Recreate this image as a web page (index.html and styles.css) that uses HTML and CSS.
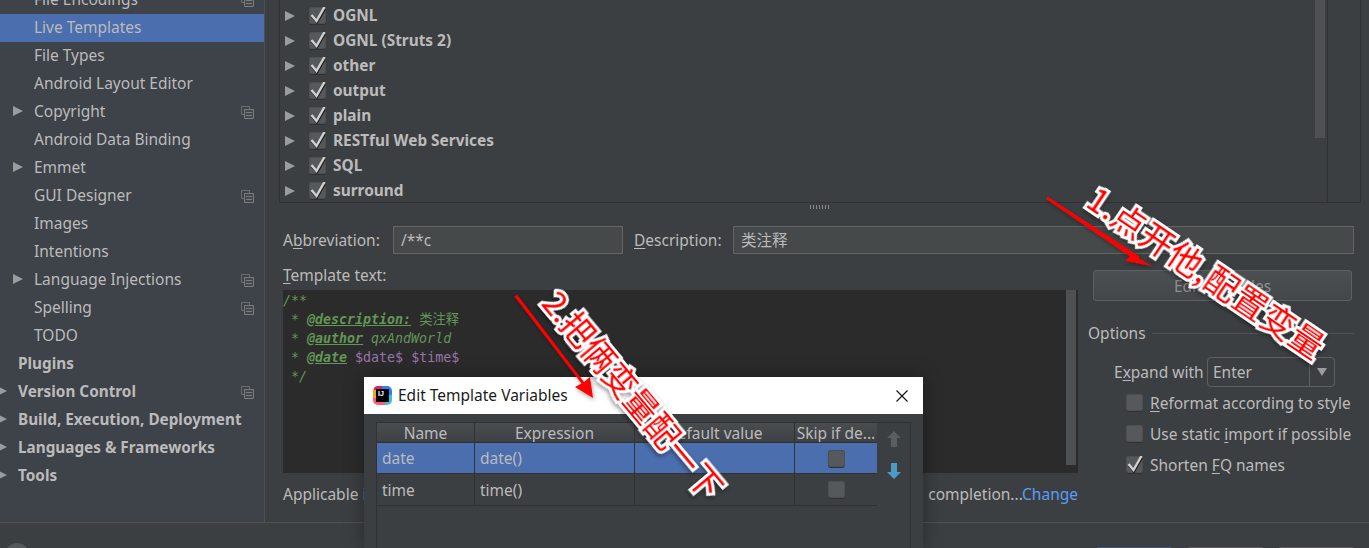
FILE: index.html
```html
<!DOCTYPE html>
<html lang="en">
<head>
<meta charset="utf-8">
<title>Live Templates</title>
<link rel="stylesheet" href="styles.css">
</head>
<body>
<svg class="defs" width="0" height="0" aria-hidden="true">
  <symbol id="copy" viewBox="0 0 13 13">
    <path d="M3.500 8.500H.5V.5h8v3" fill="none" stroke="#6b6e70"/>
    <path d="M3.500 3.500h9v9h-9zM5 6.500h6M5 9.500h6" fill="#45484a" stroke="#7b7e80"/>
  </symbol>
  <symbol id="check" viewBox="0 0 17 17">
    <path d="M3 9.500l5 6L16 2" fill="none" stroke="#1f2021" stroke-width="2.200"/>
    <path d="M2.500 8l5 6L15.500 0" fill="none" stroke="#d0d0d0" stroke-width="2.400"/>
  </symbol>
</svg>
<div class="app">
  <div class="main">
    <nav class="sidebar">
      <div class="item sub"><span class="label">File Encodings</span><svg class="copy"><use href="#copy"/></svg></div>
      <div class="item sub selected"><span class="label">Live Templates</span></div>
      <div class="item sub"><span class="label">File Types</span></div>
      <div class="item sub"><span class="label">Android Layout Editor</span></div>
      <div class="item sub"><i class="arrow nav-arrow"></i><span class="label">Copyright</span><svg class="copy"><use href="#copy"/></svg></div>
      <div class="item sub"><span class="label">Android Data Binding</span></div>
      <div class="item sub"><i class="arrow nav-arrow"></i><span class="label">Emmet</span></div>
      <div class="item sub"><span class="label">GUI Designer</span><svg class="copy"><use href="#copy"/></svg></div>
      <div class="item sub"><span class="label">Images</span></div>
      <div class="item sub"><span class="label">Intentions</span></div>
      <div class="item sub"><i class="arrow nav-arrow"></i><span class="label">Language Injections</span><svg class="copy"><use href="#copy"/></svg></div>
      <div class="item sub"><span class="label">Spelling</span><svg class="copy"><use href="#copy"/></svg></div>
      <div class="item sub"><span class="label">TODO</span></div>
      <div class="item top"><span class="label">Plugins</span></div>
      <div class="item top"><i class="arrow top-arrow"></i><span class="label">Version Control</span><svg class="copy"><use href="#copy"/></svg></div>
      <div class="item top"><i class="arrow top-arrow"></i><span class="label">Build, Execution, Deployment</span></div>
      <div class="item top"><i class="arrow top-arrow"></i><span class="label">Languages &amp; Frameworks</span></div>
      <div class="item top"><i class="arrow top-arrow"></i><span class="label">Tools</span></div>
    </nav>
    <section class="content">
      <div class="tree">
        <div class="tree-rows">
          <div class="row"><i class="arrow"></i><span class="box"><svg><use href="#check"/></svg></span><b>OGNL</b></div>
          <div class="row"><i class="arrow"></i><span class="box"><svg><use href="#check"/></svg></span><b>OGNL (Struts 2)</b></div>
          <div class="row"><i class="arrow"></i><span class="box"><svg><use href="#check"/></svg></span><b>other</b></div>
          <div class="row"><i class="arrow"></i><span class="box"><svg><use href="#check"/></svg></span><b>output</b></div>
          <div class="row"><i class="arrow"></i><span class="box"><svg><use href="#check"/></svg></span><b>plain</b></div>
          <div class="row"><i class="arrow"></i><span class="box"><svg><use href="#check"/></svg></span><b>RESTful Web Services</b></div>
          <div class="row"><i class="arrow"></i><span class="box"><svg><use href="#check"/></svg></span><b>SQL</b></div>
          <div class="row"><i class="arrow"></i><span class="box"><svg><use href="#check"/></svg></span><b>surround</b></div>
        </div>
        <div class="tree-scroll"><span class="thumb"></span></div>
        <div class="tree-side"></div>
      </div>
      <div class="splitter"><span class="dots"></span></div>
      <div class="form">
        <div class="fields">
          <span class="field-label abbr">A<u>b</u>breviation:</span>
          <span class="input abbr-input">/**c</span>
          <span class="field-label desc"><u>D</u>escription:</span>
          <span class="input desc-input">类注释</span>
        </div>
        <div class="columns">
          <div class="left">
            <div class="tt-label"><u>T</u>emplate text:</div>
            <div class="editor">
              <pre class="code"><span class="cm">/**
 * <span class="tag">@description:</span> <span class="cjk">类注释</span>
 * <span class="tag">@author</span> qxAndWorld
 * <span class="tag">@date</span> <span class="var">$date$</span> <span class="var">$time$</span>
 */</span></pre>
              <div class="ed-scroll"></div>
            </div>
            <div class="applicable"><span>Applicable in Java: statement, expression, declaration, comment, string, smart type</span><span class="app-end"><span>completion...</span><a class="link">Change</a></span></div>
          </div>
          <div class="right">
            <button class="edit-btn">Edit variables</button>
            <div class="options-head"><span>Options</span><i></i></div>
            <div class="expand"><span>E<u>x</u>pand with</span><div class="combo"><span class="combo-val">Enter</span><span class="combo-btn"><i></i></span></div></div>
            <div class="opt"><span class="box"></span><span><u>R</u>eformat according to style</span></div>
            <div class="opt"><span class="box"></span><span>Use static <u>i</u>mport if possible</span></div>
            <div class="opt"><span class="box"><svg><use href="#check"/></svg></span><span>Shorten <u>F</u>Q names</span></div>
          </div>
        </div>
      </div>
    </section>
  </div>
  <footer class="footer">
    <span class="help"></span>
    <div class="btns"><span class="btn primary"></span><span class="btn"></span><span class="btn"></span></div>
  </footer>
</div>

<div class="dialog">
  <div class="titlebar">
    <span class="logo"><span class="logo-square">IJ</span></span>
    <span class="title">Edit Template Variables</span>
    <svg class="close" width="12" height="12" viewBox="0 0 12 12"><path d="M.5.5l11 11M11.5.5l-11 11" stroke="#111" stroke-width="1.1"/></svg>
  </div>
  <div class="dlg-body">
    <div class="table-wrap">
      <div class="table">
        <div class="tr head"><span>Name</span><span>Expression</span><span>Default value</span><span>Skip if de...</span></div>
        <div class="tr sel"><span class="l">date</span><span class="l">date()</span><span></span><span><em class="box"></em></span></div>
        <div class="tr"><span class="l">time</span><span class="l">time()</span><span></span><span><em class="box"></em></span></div>
      </div>
      <div class="tools">
        <svg width="16" height="18" viewBox="0 0 16 18"><path d="M8 1l7 7h-4v9H5V8H1z" fill="#5a5d5f"/></svg>
        <svg width="16" height="18" viewBox="0 0 16 18"><path d="M5 1h6v9h4l-7 7-7-7h4z" fill="#4a9cc7"/></svg>
      </div>
    </div>
  </div>
</div>

<svg class="arrows" width="1369" height="548" viewBox="0 0 1369 548">
  <defs><filter id="sh" x="-20%" y="-20%" width="140%" height="140%"><feDropShadow dx="1" dy="2" stdDeviation="2" flood-color="#000" flood-opacity=".35"/></filter></defs>
  <g filter="url(#sh)" fill="#f00">
    <path d="M1046 199l1.500-2.500 92 60-1 1.500 13.500 8-27-5 6-6-1.500 1z"/>
    <path d="M514.500 296.500l2.500-2 67 87.500 6-5 3 21-18-11 6.500-3.500z"/>
  </g>
</svg>
<div class="note note-1">1.点开他,配置变量</div>
<div class="note note-2">2.把俩变量配一下</div>
</body>
</html>
```
FILE: styles.css
```css
* { box-sizing: border-box; }
html, body { margin: 0; height: 548px; overflow: hidden; }
body {
  position: relative;
  background: #3c3f41;
  color: #bbb;
  font: 15.5px/20px "Noto Sans", "Noto Sans CJK SC", sans-serif;
}
u { text-underline-offset: 2px; }
.defs { position: absolute; }
.app { display: flex; flex-direction: column; height: 548px; }
.main { display: flex; height: 522px; flex: none; }

/* sidebar */
.sidebar {
  width: 265px;
  flex: none;
  background: #3e4249;
  border-right: 1px solid #515151;
  overflow: hidden;
}
.item {
  display: flex;
  align-items: center;
  height: 28px;
  position: relative;
  color: #bbb;
  white-space: nowrap;
}
.item:first-child { margin-top: -14px; }
.sub { padding-left: 34px; }
.top { padding-left: 18px; font-weight: 700; font-size: 15.3px; }
.selected { background: #4b6eaf; }
.label { flex: 1; padding-bottom: 2px; }
.copy { width: 13px; height: 13px; margin-right: 10px; flex: none; }
.arrow {
  display: block;
  width: 0;
  height: 0;
  border-style: solid;
  border-width: 5.5px 0 5.5px 10px;
  border-color: transparent transparent transparent #9a9c9e;
}
.nav-arrow { position: absolute; left: 13px; top: 8px; }
.top-arrow { position: absolute; left: -3px; top: 8px; }

/* tree */
.content { flex: 1; min-width: 0; padding: 0 8px 0 14px; }
.tree {
  height: 203px;
  display: flex;
  border: 1px solid #2f3133;
  border-top: 0;
  overflow: hidden;
}
.tree-rows { flex: 1; padding-top: 3px; }
.row { display: flex; align-items: center; height: 25px; padding-left: 5px; }
.row b { font-weight: 700; font-size: 15.4px; margin-left: 7px; }
.row .box { margin-left: 14px; }
.tree-scroll { width: 12px; }
.thumb { display: block; width: 10px; height: 138px; background: #4e5052; }
.tree-side { width: 33px; border-left: 1px solid #2f3133; }
.box {
  display: block;
  width: 17px;
  height: 17px;
  flex: none;
  background: #56595b;
  border-radius: 3px;
  box-shadow: inset 0 0 0 1px #4d4f51, 0 1px 0 #2f3133;
}
.box svg { display: block; width: 17px; height: 17px; overflow: visible; }
.splitter { height: 7px; display: flex; justify-content: center; align-items: center; }
.dots { width: 20px; height: 4px; background: repeating-linear-gradient(90deg, #888 0 1px, transparent 1px 3px); }

/* form */
.form { padding: 0 7px 0 4px; }
.fields { display: flex; align-items: center; height: 28px; margin-top: 16px; }
.input {
  height: 28px;
  background: #45494a;
  border: 1px solid #646464;
  padding: 3px 7px;
  white-space: nowrap;
}
.abbr { width: 110px; }
.abbr-input { width: 230px; }
.desc { width: 99px; margin-left: 11px; }
.desc-input { flex: 1; }
.columns { display: flex; }
.left { width: 795px; flex: none; }
.tt-label { margin-top: 11px; height: 25px; }
.editor {
  height: 183px;
  background: #2b2b2b;
  display: flex;
  justify-content: space-between;
  padding-right: 2px;
}
.code {
  margin: 0;
  padding-top: 1px;
  font: 13.3px/19px "DejaVu Sans Mono", "Noto Sans CJK SC", monospace;
}
.cm { color: #629755; font-style: italic; }
.cjk { font-style: normal; }
.tag { font-weight: 700; text-decoration: underline; }
.var { color: #9876aa; font-style: normal; }
.ed-scroll { width: 10px; height: 175px; background: #4e5052; }
.applicable { margin-top: 11px; white-space: nowrap; display: flex; justify-content: space-between; }
.link { color: #589df6; }
.right { width: 266px; margin-left: 10px; flex: none; }
.edit-btn {
  display: block;
  width: 259px;
  height: 31px;
  margin: 16px 0 0 5px;
  background: linear-gradient(#4b4f51, #434749);
  border: 1px solid #5e6060;
  border-radius: 3px;
  color: #8c8e90;
  font: inherit;
}
.options-head { display: flex; align-items: center; gap: 6px; margin-top: 22px; height: 20px; }
.options-head i { flex: 1; height: 1px; background: #515151; }
.expand { display: flex; align-items: center; height: 30px; margin-top: 14px; padding: 0 19px 0 26px; justify-content: space-between; }
.combo { display: flex; width: 128px; height: 30px; border: 1px solid #5e6060; border-radius: 4px; }
.combo-val { flex: 1; padding: 4px 5px; }
.combo-btn { width: 25px; border-left: 1px solid #5e6060; display: flex; align-items: center; justify-content: center; }
.combo-btn i { width: 0; height: 0; border: 5px solid transparent; border-top: 8px solid #9a9c9e; border-bottom: 0; }
.opt { display: flex; align-items: center; gap: 7px; height: 31px; padding-left: 38px; white-space: nowrap; }

/* footer */
.footer { flex: 1; border-top: 1px solid #515151; position: relative; overflow: hidden; }
.help { position: absolute; left: 5px; top: 20px; width: 24px; height: 24px; border-radius: 50%; background: #56595b; }
.btns { display: flex; justify-content: flex-end; gap: 14px; padding: 24px 14px 0 0; }
.btn { width: 77px; height: 28px; border: 1px solid #5e6060; border-radius: 3px; background: #4a4e50; }
.primary { border-color: #385d85; background: #3f5a78; }

/* dialog overlay */
.dialog {
  position: absolute;
  left: 364px;
  top: 377px;
  width: 559px;
  height: 171px;
  background: #3c3f41;
  box-shadow: 0 0 18px rgba(0,0,0,.35);
  overflow: hidden;
}
.titlebar { height: 37px; background: #fff; color: #1b1b1b; display: flex; align-items: center; padding-left: 9px; }
.logo {
  width: 19px; height: 19px; flex: none; display: block; position: relative;
  background: conic-gradient(#2f80ed 0 25%, #35c0e8 25% 45%, #ff5a7a 45% 70%, #f7a01c 70% 85%, #d61f78 85%);
  border-radius: 5px;
}
.logo-square {
  position: absolute; left: 3px; top: 3px; width: 13px; height: 13px; background: #000; color: #fff;
  font: 700 7px/10px "Liberation Sans", sans-serif; padding-left: 2px;
}
.title { margin-left: 6px; flex: 1; padding-bottom: 2px; }
.close { margin-right: 15px; }
.dlg-body { padding: 8px 12px 0 12px; }
.table-wrap { display: flex; width: 535px; height: 140px; border: 1px solid #2f3133; }
.table { width: 500px; flex: none; }
.tr { display: grid; grid-template-columns: 98px 160px 160px 82px; height: 32px; border-bottom: 1px solid #2f3133; align-items: stretch; }
.tr > span { display: flex; align-items: center; border-right: 1px solid #2f3133; }
.tr > .l { padding-left: 5px; }
.head { height: 20px; background: linear-gradient(#4a4d50, #3e4143); }
.head > span { justify-content: center; white-space: nowrap; overflow: hidden; line-height: 20px; }
.sel { height: 31px; background: #4b6eaf; }
.tr > span:last-child { justify-content: center; border-right: 0; }
.tools { flex: 1; display: flex; flex-direction: column; align-items: center; gap: 14px; padding-top: 7px; }

/* hand-drawn annotations */
.arrows { position: absolute; left: 0; top: 0; pointer-events: none; }
.note {
  position: absolute;
  color: #f00;
  white-space: nowrap;
  -webkit-text-stroke: 6px #fff;
  paint-order: stroke fill;
  transform-origin: 0 50%;
  filter: drop-shadow(1px 2px 2px rgba(0,0,0,.4));
  font-family: "Noto Sans CJK SC", sans-serif;
}
.note-1 { left: 1092px; top: 176px; font-size: 33px; line-height: 36px; letter-spacing: 1px; text-spacing-trim: space-all; transform: rotate(34deg); }
.note-2 { left: 551px; top: 277px; font-size: 33px; line-height: 36px; transform: rotate(50deg); }
```
